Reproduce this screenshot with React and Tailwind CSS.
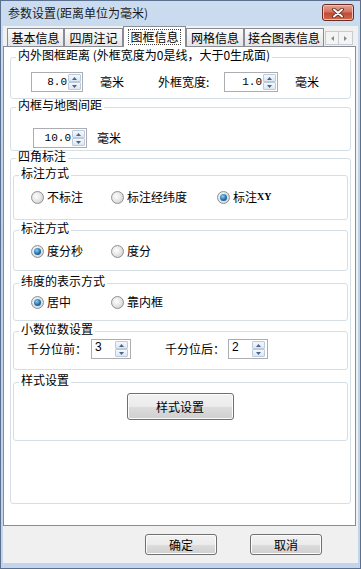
import React from "react";

// Win7 basic style dialog: 参数设置
const FONT = "font-['Noto_Sans_CJK_SC','Noto_Sans',sans-serif]";

function GroupBox({ title, className = "", children }) {
  return (
    <fieldset className={`border border-[#d5dfe5] rounded-[3px] ${className}`}>
      <legend className="ml-[5px] px-[2px] pb-[4px] text-[12px] leading-[10px] text-black">
        {title}
      </legend>
      {children}
    </fieldset>
  );
}

function SpinArrows({ className = "" }) {
  const btn =
    "flex-1 flex items-center justify-center border border-[#bccbdc] rounded-[1px] bg-[linear-gradient(#f4f8fc,#dce7f3)]";
  return (
    <div className={`flex flex-col w-[13px] ${className}`}>
      <div className={btn}>
        <svg width="5" height="3" viewBox="0 0 5 3">
          <path d="M0 3L2.5 0L5 3Z" fill="#4e6384" />
        </svg>
      </div>
      <div className={btn}>
        <svg width="5" height="3" viewBox="0 0 5 3">
          <path d="M0 0L2.5 3L5 0Z" fill="#4e6384" />
        </svg>
      </div>
    </div>
  );
}

function NumSpin({ value, className = "" }) {
  return (
    <div className={`flex h-[20px] border border-[#abadb3] bg-white ${className}`}>
      <div className="flex-1 flex items-center justify-end pr-[1px] font-['Liberation_Mono',monospace] text-[11px] text-black">
        {value}
      </div>
      <SpinArrows className="my-[1px] mr-[1px]" />
    </div>
  );
}

function DigitSpin({ value }) {
  return (
    <div className="flex w-[40px] h-[20px] border border-[#abadb3] bg-white">
      <div className="flex-1 pl-[3px] font-['Liberation_Sans',sans-serif] text-[12px] leading-[14px] text-black">
        {value}
      </div>
      <SpinArrows className="my-[1px] mr-[2px] w-[12px]" />
    </div>
  );
}

function Radio({ checked, label, className = "" }) {
  return (
    <div className={`flex items-center ${className}`}>
      <span className="flex items-center justify-center w-[13px] h-[13px] rounded-full border border-[#8f9192] bg-[radial-gradient(circle_at_40%_40%,#ffffff,#e2e2e2_55%,#c2c2c2)]">
        {checked && (
          <span className="w-[7px] h-[7px] rounded-full bg-[radial-gradient(circle_at_40%_35%,#8ed0f5,#1f6fae_55%,#0d4577)]" />
        )}
      </span>
      <span className="ml-[3px] text-[12px] leading-[14px] text-black">{label}</span>
    </div>
  );
}

function WinButton({ children, className = "" }) {
  return (
    <button
      className={`flex items-center justify-center rounded-[3px] border border-[#707070] bg-[linear-gradient(#f2f2f2_0%,#ebebeb_50%,#dddddd_50%,#cfcfcf_100%)] shadow-[inset_0_0_0_1px_#fcfcfc] text-[12px] text-black ${className}`}
    >
      {children}
    </button>
  );
}

const tabs = [
  { label: "基本信息", w: "w-[57px]" },
  { label: "四周注记", w: "w-[59px]" },
  { label: "图框信息", w: "w-[63px]", active: true },
  { label: "网格信息", w: "w-[58px]" },
  { label: "接合图表信息", w: "w-[80px]" },
];

export default function App() {
  return (
    <div
      className={`${FONT} w-[361px] h-[569px] flex flex-col border border-[#5b708f] bg-[linear-gradient(#cbdcf0,#bdd1ea_40%,#c2d5ec)] select-none`}
    >
      {/* Title bar */}
      <div className="h-[25px] flex items-start shrink-0">
        <span className="pl-[7px] pt-[4px] text-[12px] leading-[16px] text-[#1b1b1b]">
          参数设置(距离单位为毫米)
        </span>
        <div className="ml-auto mr-[6px] mt-[3px] w-[32px] h-[17px] rounded-[3px] border border-[#6d2b22] bg-[linear-gradient(#e8a493,#d27462_45%,#c14a33_55%,#cf6a4c)] shadow-[inset_0_0_0_1px_#eec2b6] flex items-center justify-center">
          <svg width="12" height="10" viewBox="0 0 12 10">
            <path d="M2 1.5L10 8.5M10 1.5L2 8.5" stroke="#5a1f17" strokeWidth="3.6" strokeLinecap="round" />
            <path d="M2 1.5L10 8.5M10 1.5L2 8.5" stroke="#ffffff" strokeWidth="2" strokeLinecap="round" />
          </svg>
        </div>
      </div>

      {/* Client area */}
      <div className="flex-1 mx-[2px] mb-[5px] bg-[#f0f0f0] flex flex-col">
        {/* Tabs */}
        <div className="h-[20px] flex items-end pl-[4px] shrink-0">
          {tabs.map((t) =>
            t.active ? (
              <div
                key={t.label}
                className={`${t.w} h-[21px] -mb-px relative z-10 bg-white border border-b-0 border-[#898c95] flex items-center justify-center`}
              >
                <span className="border border-dotted border-[#444] px-[1px] text-[12px] leading-[14px] text-black">
                  {t.label}
                </span>
              </div>
            ) : (
              <div
                key={t.label}
                className={`${t.w} h-[18px] border border-b-0 border-[#898c95] bg-[linear-gradient(#fbfbfb,#e4e4e4)] flex items-center justify-center text-[12px] leading-[14px] text-black`}
              >
                {t.label}
              </div>
            )
          )}
          <div className="ml-auto mr-[5px] mb-[1px] flex">
            <div className="w-[14px] h-[14px] border border-[#c9ccd1] bg-[#f4f4f4] flex items-center justify-center">
              <svg width="3" height="5" viewBox="0 0 3 5">
                <path d="M3 0L0 2.5L3 5Z" fill="#8a8a8a" />
              </svg>
            </div>
            <div className="w-[14px] h-[14px] border border-l-0 border-[#c9ccd1] bg-[#f4f4f4] flex items-center justify-center">
              <svg width="3" height="5" viewBox="0 0 3 5">
                <path d="M0 0L3 2.5L0 5Z" fill="#8a8a8a" />
              </svg>
            </div>
          </div>
        </div>

        {/* Panel */}
        <div className="w-[353px] h-[480px] shrink-0 bg-white border border-[#898c95] pl-[6px] pt-[3px] text-[12px] text-black">
          <GroupBox title="内外图框距离 (外框宽度为0是线，大于0生成面)" className="w-[341px] h-[49px]">
            <div className="flex items-center mt-[8px] pl-[20px]">
              <NumSpin value="8.0" className="w-[52px]" />
              <span className="ml-[17px] w-[58px] leading-[14px]">毫米</span>
              <span className="w-[66px] leading-[14px]">外框宽度:</span>
              <NumSpin value="1.0" className="w-[54px]" />
              <span className="ml-[17px] leading-[14px]">毫米</span>
            </div>
          </GroupBox>

          <GroupBox title="内框与地图间距" className="w-[341px] h-[51px] mt-[1px]">
            <div className="flex items-center mt-[14px] pl-[22px]">
              <NumSpin value="10.0" className="w-[54px]" />
              <span className="ml-[10px] leading-[14px]">毫米</span>
            </div>
          </GroupBox>

          <GroupBox title="四角标注" className="w-[341px] h-[353px]">
            <div className="pl-[2px]">
              <GroupBox title="标注方式" className="w-[335px] h-[52px] mt-[3px]">
                <div className="flex mt-[8px] pl-[17px]">
                  <Radio label="不标注" className="w-[80px]" />
                  <Radio label="标注经纬度" className="w-[106px]" />
                  <Radio
                    checked
                    label={
                      <span>
                        标注<span className="font-['Liberation_Serif',serif] text-[10px] font-bold align-top">XY</span>
                      </span>
                    }
                  />
                </div>
              </GroupBox>

              <GroupBox title="标注方式" className="w-[335px] h-[48px] mt-[3px]">
                <div className="flex mt-[7px] pl-[17px]">
                  <Radio checked label="度分秒" className="w-[80px]" />
                  <Radio label="度分" />
                </div>
              </GroupBox>

              <GroupBox title="纬度的表示方式" className="w-[335px] h-[45px] mt-[5px]">
                <div className="flex mt-[5px] pl-[17px]">
                  <Radio checked label="居中" className="w-[80px]" />
                  <Radio label="靠内框" />
                </div>
              </GroupBox>

              <GroupBox title="小数位数设置" className="w-[335px] h-[46px] mt-[3px]">
                <div className="flex items-center mt-[1px] pl-[13px]">
                  <span className="w-[64px] leading-[14px]">千分位前：</span>
                  <DigitSpin value="3" />
                  <span className="ml-[34px] w-[63px] leading-[14px]">千分位后：</span>
                  <DigitSpin value="2" />
                </div>
              </GroupBox>

              <GroupBox title="样式设置" className="w-[335px] h-[66px] mt-[5px]">
                <div className="flex justify-center mt-[4px]">
                  <WinButton className="w-[107px] h-[27px] mr-[1px]">样式设置</WinButton>
                </div>
              </GroupBox>
            </div>
          </GroupBox>
        </div>

        {/* Buttons */}
        <div className="flex-1 flex justify-end items-start pt-[8px] pr-[36px] gap-[33px]">
          <WinButton className="w-[72px] h-[21px]">确定</WinButton>
          <WinButton className="w-[72px] h-[21px]">取消</WinButton>
        </div>
      </div>
    </div>
  );
}
